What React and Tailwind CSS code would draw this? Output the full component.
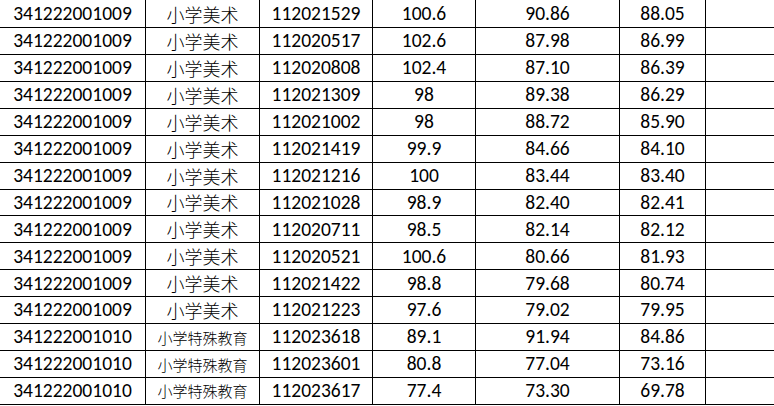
import React from "react";

const rows = [
  ["341222001009", "小学美术", "112021529", "100.6", "90.86", "88.05"],
  ["341222001009", "小学美术", "112020517", "102.6", "87.98", "86.99"],
  ["341222001009", "小学美术", "112020808", "102.4", "87.10", "86.39"],
  ["341222001009", "小学美术", "112021309", "98", "89.38", "86.29"],
  ["341222001009", "小学美术", "112021002", "98", "88.72", "85.90"],
  ["341222001009", "小学美术", "112021419", "99.9", "84.66", "84.10"],
  ["341222001009", "小学美术", "112021216", "100", "83.44", "83.40"],
  ["341222001009", "小学美术", "112021028", "98.9", "82.40", "82.41"],
  ["341222001009", "小学美术", "112020711", "98.5", "82.14", "82.12"],
  ["341222001009", "小学美术", "112020521", "100.6", "80.66", "81.93"],
  ["341222001009", "小学美术", "112021422", "98.8", "79.68", "80.74"],
  ["341222001009", "小学美术", "112021223", "97.6", "79.02", "79.95"],
  ["341222001010", "小学特殊教育", "112023618", "89.1", "91.94", "84.86"],
  ["341222001010", "小学特殊教育", "112023601", "80.8", "77.04", "73.16"],
  ["341222001010", "小学特殊教育", "112023617", "77.4", "73.30", "69.78"],
];

const numCls =
  "font-['Carlito','Open_Sans','Liberation_Sans',sans-serif] text-[19.5px] leading-none";

function Cell({ w, children, className = "" }) {
  return (
    <div
      className={`flex shrink-0 items-center justify-center border-r border-black text-black ${w} ${className}`}
    >
      {children}
    </div>
  );
}

export default function App() {
  return (
    <div className="w-[774px] h-[406px] overflow-hidden bg-white">
      {rows.map((r, i) => (
        <div
          key={i}
          className={`flex border-b border-black ${i === 0 ? "h-[28px]" : "h-[26.93px]"}`}
        >
          <Cell w="w-[146px]" className={numCls}>{r[0]}</Cell>
          <Cell
            w="w-[114px]"
            className={`font-['Noto_Sans_CJK_SC',sans-serif] font-light leading-none ${
              r[1].length > 4 ? "text-[15px]" : "text-[18px]"
            }`}
          >
            {r[1]}
          </Cell>
          <Cell w="w-[113px]" className={numCls}>{r[2]}</Cell>
          <Cell w="w-[103px]" className={numCls}>{r[3]}</Cell>
          <Cell w="w-[144px]" className={numCls}>{r[4]}</Cell>
          <Cell w="w-[86px]" className={numCls}>{r[5]}</Cell>
          <div className="w-[80px] shrink-0" />
        </div>
      ))}
    </div>
  );
}
